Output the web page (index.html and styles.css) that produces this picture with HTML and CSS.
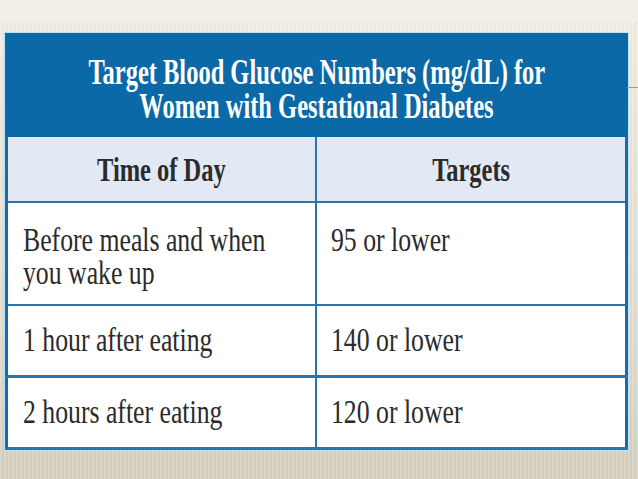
FILE: index.html
```html
<!DOCTYPE html>
<html>
<head>
<meta charset="utf-8">
<link rel="stylesheet" href="styles.css">
</head>
<body>
<div class="slide">
  <div class="card">
    <div class="title">
      <span class="sq c">Target Blood Glucose Numbers (mg/dL) for</span>
      <span class="sq c">Women with Gestational Diabetes</span>
    </div>
    <table class="grid">
      <tr class="head">
        <th class="col1"><span class="sq c">Time of Day</span></th>
        <th><span class="sq c">Targets</span></th>
      </tr>
      <tr class="r1">
        <td><span class="sq l">Before meals and when<br>you wake up</span></td>
        <td><span class="sq l">95 or lower</span></td>
      </tr>
      <tr class="r2">
        <td><span class="sq l">1 hour after eating</span></td>
        <td><span class="sq l">140 or lower</span></td>
      </tr>
      <tr class="r3">
        <td><span class="sq l">2 hours after eating</span></td>
        <td><span class="sq l">120 or lower</span></td>
      </tr>
    </table>
  </div>
</div>
</body>
</html>
```
FILE: styles.css
```css
html, body {
  margin: 0;
  padding: 0;
}
body {
  width: 638px;
  height: 479px;
  overflow: hidden;
  font-family: "Liberation Serif", "Times New Roman", serif;
}
.slide {
  position: relative;
  width: 638px;
  height: 479px;
  box-sizing: border-box;
  padding: 33px 0 0 5px;
  background:
    repeating-linear-gradient(90deg, rgba(255,255,255,0.12) 0 2px, rgba(120,110,90,0.04) 2px 4px),
    linear-gradient(180deg, #f2efe6 0px, #f0ede3 22px, #ebe7da 120px, #e2ddcf 300px, #d6d0c0 479px);
}
.slide::before {
  content: "";
  position: absolute;
  left: 0;
  top: 0;
  width: 638px;
  height: 22px;
  background: #f2efe6;
}
.slide::after {
  content: "";
  position: absolute;
  left: 627px;
  top: 87px;
  width: 11px;
  height: 1px;
  background: #9a9a9a;
}
.card {
  position: relative;
  width: 623px;
  box-shadow: 0 0 0 1px #bfe3f3;
}
.title {
  height: 104px;
  box-sizing: border-box;
  background: #0c69a7;
  color: #ffffff;
  font-weight: bold;
  font-size: 36px;
  line-height: 34px;
  padding-top: 22px;
  display: flex;
  flex-direction: column;
  align-items: center;
}
.title .sq.c {
  transform: scaleX(0.68);
}
.sq {
  display: inline-block;
  white-space: nowrap;
}
.sq.c {
  transform: scaleX(0.72);
  transform-origin: center;
}
.sq.l {
  transform: scaleX(0.78);
  transform-origin: left;
}
.grid {
  width: 623px;
  border-collapse: collapse;
  table-layout: fixed;
  border: 3px solid #1b6aa6;
  border-top: none;
}
.grid th, .grid td {
  border: 2px solid #2a74ad;
  padding: 0 0 0 15px;
  color: #2b2b2b;
  background: #ffffff;
  font-size: 33px;
  line-height: 33px;
  text-align: left;
}
.grid th {
  text-align: center;
  padding: 0;
  background: #e2e9f4;
  font-weight: bold;
  font-size: 34px;
  height: 64px;
  vertical-align: middle;
  border-top: none;
}
.col1 {
  width: 307px;
}
.r1 td {
  height: 103px;
  vertical-align: top;
  padding-top: 21px;
  box-sizing: border-box;
}
.r2 td {
  height: 69px;
  vertical-align: middle;
}
.r3 td {
  height: 69px;
  vertical-align: middle;
}
.r3 td, .r2 td {
  border-bottom-width: 3px;
}
.grid td:nth-child(2) {
  padding-left: 14px;
}
```
